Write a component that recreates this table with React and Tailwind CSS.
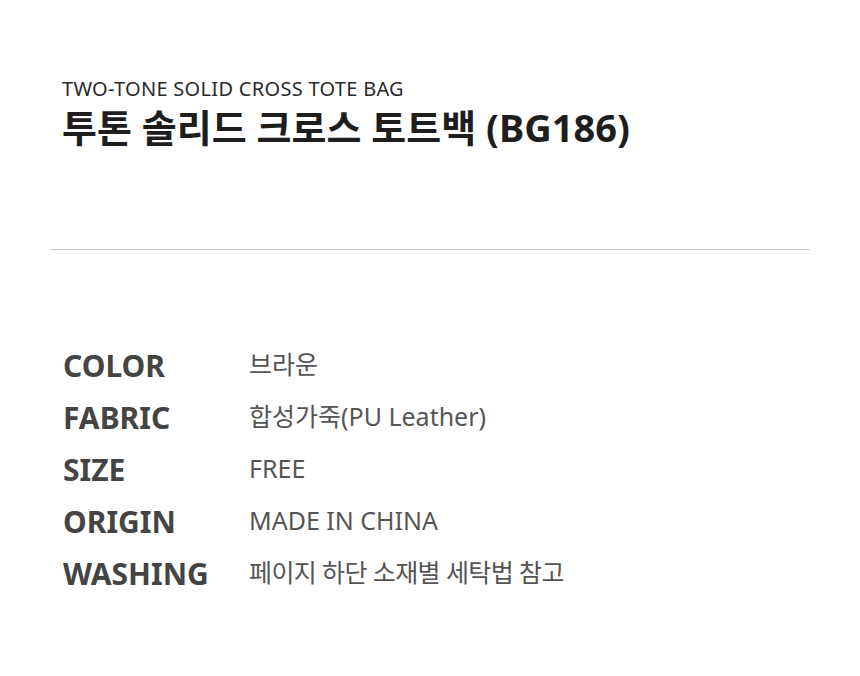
const specs = [
  { label: 'COLOR', value: '브라운' },
  { label: 'FABRIC', value: '합성가죽(PU Leather)' },
  { label: 'SIZE', value: 'FREE' },
  { label: 'ORIGIN', value: 'MADE IN CHINA' },
  { label: 'WASHING', value: '페이지 하단 소재별 세탁법 참고', tight: true },
];

export default function App() {
  return (
    <div
      className="w-[860px] h-[676px] bg-white overflow-hidden"
      style={{ fontFamily: '"Noto Sans", "Noto Sans CJK KR", sans-serif' }}
    >
      <div className="px-[62px] pt-[75px]">
        <p className="text-[20px] leading-[27px] text-[#2a2a2a] tracking-[0.3px]">TWO-TONE SOLID CROSS TOTE BAG</p>
        <h1 className="text-[38px] leading-[50px] font-bold text-[#1e1e1e]">투톤 솔리드 크로스 토트백 (BG186)</h1>
      </div>
      <div className="mx-[50px] mt-[97px] border-t border-[#cfcfcf]" />
      <div className="px-[63px] pt-[89px] flex flex-col">
        {specs.map((s) => (
          <div key={s.label} className="flex items-center h-[52px]">
            <span className="w-[186px] text-[30px] font-bold text-[#444]">{s.label}</span>
            <span className={s.tight ? 'text-[25px] text-[#555] tracking-[-0.6px]' : 'text-[25px] text-[#555]'}>{s.value}</span>
          </div>
        ))}
      </div>
    </div>
  );
}
